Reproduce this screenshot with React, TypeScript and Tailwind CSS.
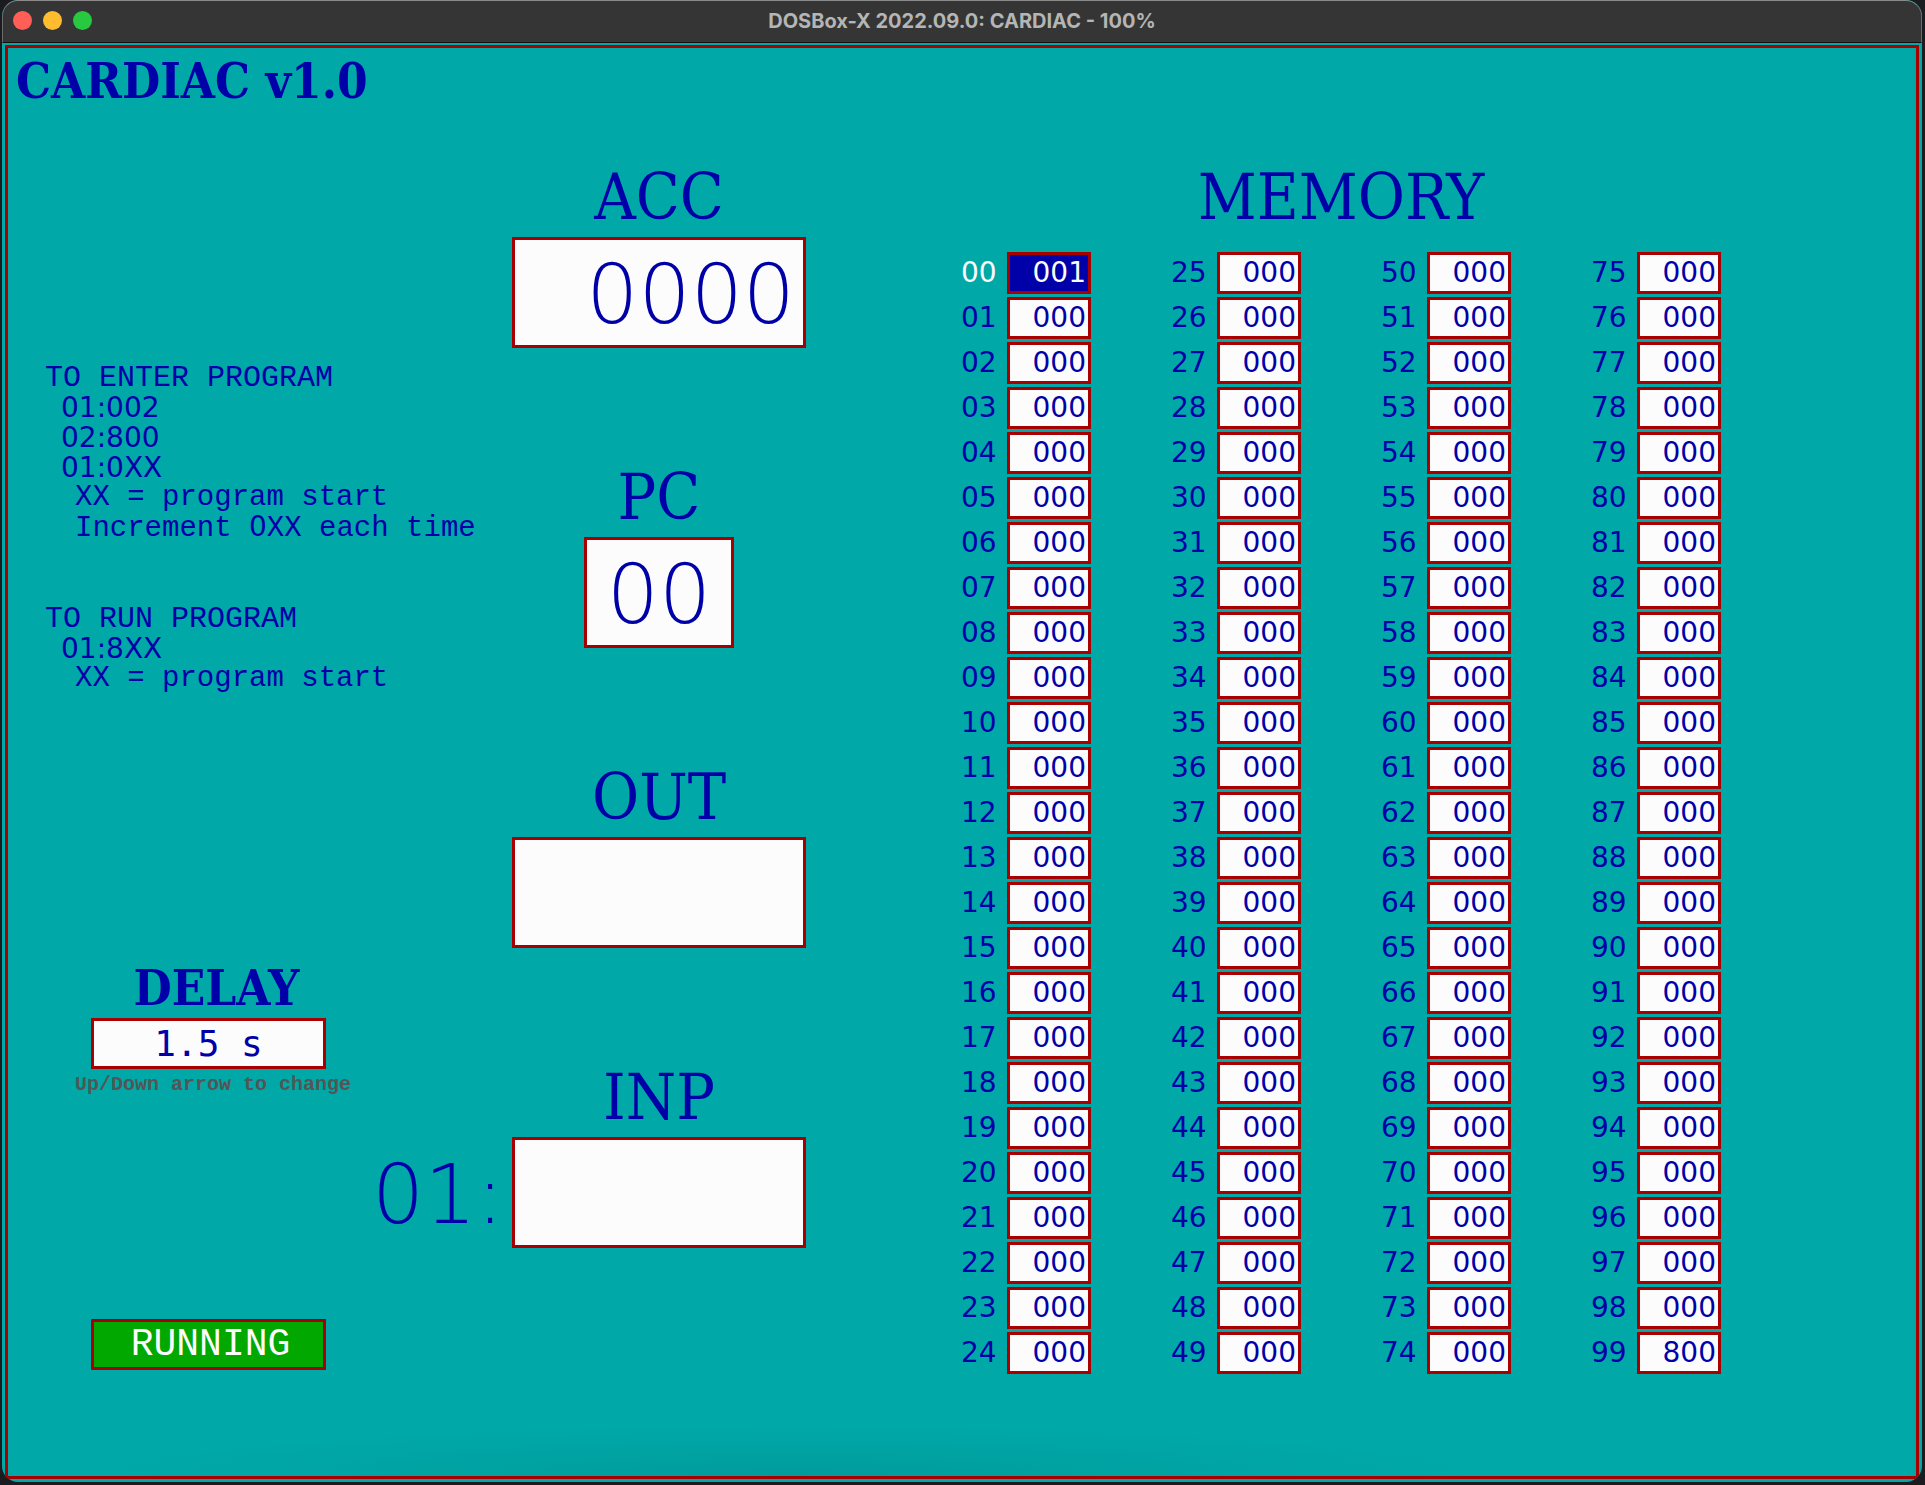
import type { ReactNode } from "react";

const HEADING =
  "block text-center text-[64px] leading-[64px] text-[#0000a8] font-['DejaVu_Serif_Condensed','DejaVu_Serif',serif]";
const BOLD_HEADING =
  "whitespace-nowrap text-[49px] leading-[48px] font-bold text-[#0000a8] font-['DejaVu_Serif_Condensed','DejaVu_Serif',serif]";
const PANEL = "border-3 border-[#a80000] bg-[#fcfcfc]";
const BIG_DIGITS =
  "text-[82px] font-extralight font-['DejaVu_Sans_Light','DejaVu_Sans',sans-serif]";
const SMALL_DIGITS = "text-[28px] font-['DejaVu_Sans',sans-serif]";

const memory: string[] = Array.from({ length: 100 }, (_, i) =>
  i === 0 ? "001" : i === 99 ? "800" : "000",
);

function Digits({ children }: { children: ReactNode }) {
  return <span className={`leading-none ${SMALL_DIGITS}`}>{children}</span>;
}

function Register({
  id,
  name,
  value,
  narrow = false,
}: {
  id: string;
  name: string;
  value: string;
  narrow?: boolean;
}) {
  return (
    <div>
      <label htmlFor={id} className={HEADING}>
        {name}
      </label>
      <output
        id={id}
        className={`mx-auto mt-2 flex h-[111px] items-center pt-1 ${BIG_DIGITS} leading-none text-[#0000a8] ${PANEL} ${
          narrow ? "w-[150px] justify-center" : "w-full justify-end pr-2"
        }`}
      >
        {value}
      </output>
    </div>
  );
}

function MemoryColumn({ start }: { start: number }) {
  return (
    <table className={`border-collapse leading-[30px] ${SMALL_DIGITS}`}>
      <tbody>
        {memory.slice(start, start + 25).map((value, i) => {
          const address = start + i;
          const active = address === 0;
          return (
            <tr key={address} className={active ? "text-[#fcfcfc]" : "text-[#0000a8]"}>
              <th scope="row" className="w-[46px] p-0 pb-[3px] text-left font-normal">
                {String(address).padStart(2, "0")}
              </th>
              <td className="w-[84px] p-0 pb-[3px]">
                <div
                  className={`h-[42px] border-3 border-[#a80000] pt-[3px] pr-[2px] text-right ${
                    active ? "bg-[#0000a8]" : "bg-[#fcfcfc]"
                  }`}
                >
                  {value}
                </div>
              </td>
            </tr>
          );
        })}
      </tbody>
    </table>
  );
}

export default function App() {
  return (
    <div className="flex min-h-screen bg-[#1b1c20] pr-[3px] pb-[3px] pl-[2px]">
      <div className="flex flex-1 flex-col overflow-hidden rounded-2xl bg-[#00a8a8]">
        <header className="relative flex h-[43px] items-center justify-center rounded-t-2xl border-x border-t border-b border-x-[#6a6b6a] border-t-[#8a8b8a] border-b-[#101010] bg-[#343534] pb-[2px]">
          <div className="absolute left-[10px] flex gap-[11px]">
            <button aria-label="Close" className="size-[19px] rounded-full bg-[#ff5f57]" />
            <button aria-label="Minimize" className="size-[19px] rounded-full bg-[#febc2e]" />
            <button aria-label="Zoom" className="size-[19px] rounded-full bg-[#28c840]" />
          </div>
          <div className="text-[20px] leading-6 font-bold text-[#b4b5b4] font-[Inter,sans-serif]">
            DOSBox-X 2022.09.0: CARDIAC - 100%
          </div>
        </header>

        <main className="mx-[3px] mt-[2px] mb-[3px] flex-1 border-3 border-[#a80000] bg-[radial-gradient(ellipse_36%_50px_at_41%_100%,#009c9c,#00a8a8)] pt-[9px]">
          <h1 className={`pl-2 ${BOLD_HEADING}`}>CARDIAC v1.0</h1>

          <div className="mt-[60px] grid grid-cols-[504fr_294fr_155fr_760fr_195fr]">
            <div className="flex flex-col text-[#0000a8]">
              <div className="mt-[198px] pl-[37px] text-[30px] leading-[30px] whitespace-nowrap font-['Liberation_Mono',monospace]">
                <section>
                  <h2>TO ENTER PROGRAM</h2>
                  <div className={`pl-4 ${SMALL_DIGITS}`}>
                    <p>01:002</p>
                    <p>02:800</p>
                    <p>01:0XX</p>
                  </div>
                  <div className="pl-[30px] text-[29px]">
                    <p>XX = program start</p>
                    <p>
                      Increment <Digits>0</Digits>XX each time
                    </p>
                  </div>
                </section>
                <section className="mt-[60px]">
                  <h2>TO RUN PROGRAM</h2>
                  <p className={`pl-4 ${SMALL_DIGITS}`}>01:8XX</p>
                  <p className="pl-[30px] text-[29px]">XX = program start</p>
                </section>
              </div>

              <div className="mt-[270px] ml-[83px] w-[235px]">
                <label htmlFor="delay" className={`block pl-4 text-center ${BOLD_HEADING}`}>
                  DELAY
                </label>
                <output
                  id="delay"
                  className={`mt-[6px] flex h-[51px] items-center justify-center text-[36px] leading-none font-['DejaVu_Sans_Mono',monospace] ${PANEL}`}
                >
                  1.5 s
                </output>
              </div>
              <p className="mt-1 pl-[67px] text-[20px] leading-6 font-bold text-[#555555] font-['Liberation_Mono',monospace]">
                Up/Down arrow to change
              </p>

              <div className={`mt-[68px] pr-2 text-right leading-[60px] ${BIG_DIGITS}`}>01:</div>

              <div
                role="status"
                className="mt-[94px] ml-[83px] flex h-[51px] w-[235px] items-center justify-center border-3 border-[#a80000] bg-[#00a800] pl-1 text-[38px] leading-none text-[#fcfcfc] font-['Liberation_Mono',monospace]"
              >
                RUNNING
              </div>
            </div>

            <div className="flex flex-col gap-[117px]">
              <Register id="acc" name="ACC" value="0000" />
              <Register id="pc" name="PC" value="00" narrow />
              <Register id="out" name="OUT" value="" />
              <div>
                <label htmlFor="inp" className={HEADING}>
                  INP
                </label>
                <input
                  id="inp"
                  type="text"
                  className={`mt-2 block h-[111px] w-full pr-2 text-right text-[#0000a8] outline-none ${BIG_DIGITS} ${PANEL}`}
                />
              </div>
            </div>

            <div className="col-start-4">
              <h2 className={HEADING}>MEMORY</h2>
              <div className="mt-[23px] flex justify-between">
                <MemoryColumn start={0} />
                <MemoryColumn start={25} />
                <MemoryColumn start={50} />
                <MemoryColumn start={75} />
              </div>
            </div>
          </div>
        </main>
      </div>
    </div>
  );
}
